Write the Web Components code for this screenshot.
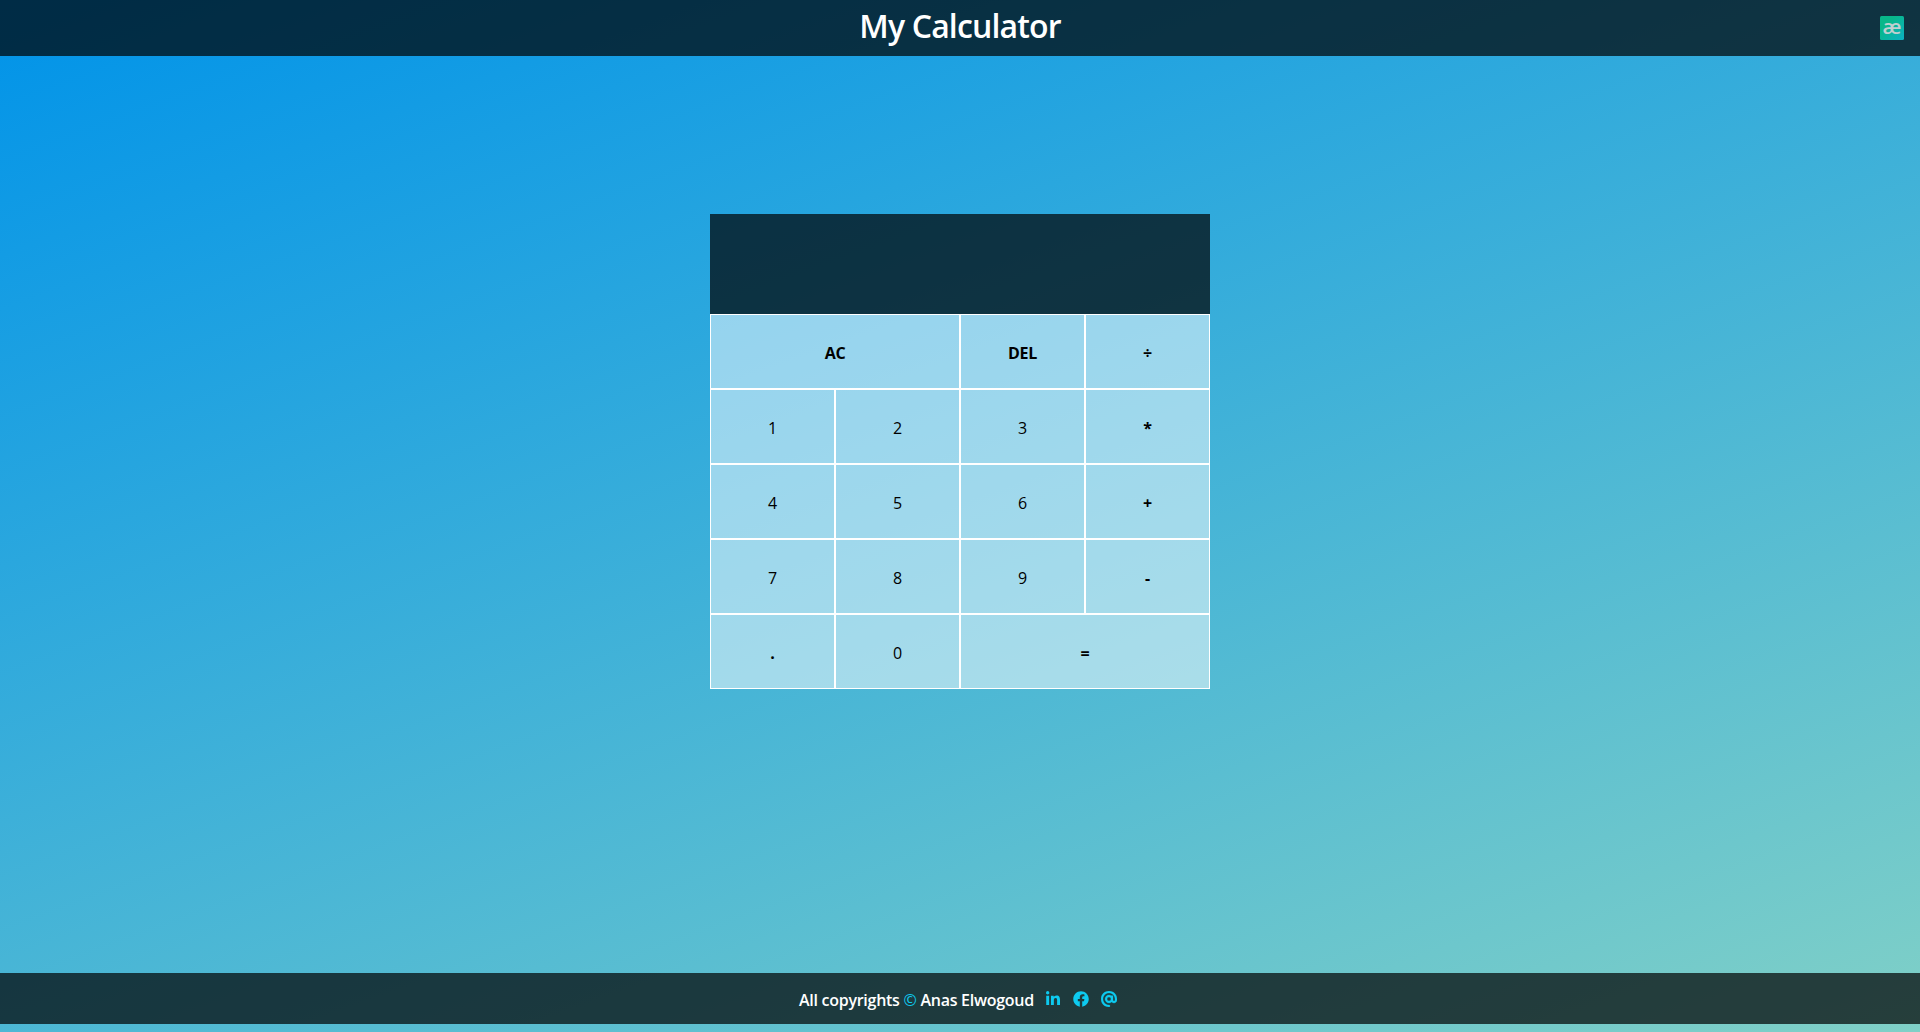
<!DOCTYPE html>
<html lang="en">
<head>
<meta charset="utf-8">
<title>My Calculator</title>
<style>
html{height:100%}
body{margin:0;height:100%;overflow:hidden;font-family:"Open Sans","Noto Sans",sans-serif;font-size:16px;line-height:24px;background:linear-gradient(160deg,#0093E9 0%,#80D0C7 100%)}
</style>
</head>
<body>
<calc-app></calc-app>
<script>
const define = (name, html) => customElements.define(name, class extends HTMLElement {
  constructor() {
    super();
    this.attachShadow({mode: 'open'}).innerHTML = html;
  }
});

define('brand-logo', `
<style>:host{display:block;width:24px;height:24px}svg{display:block;overflow:visible}text{font:600 20px "Open Sans",sans-serif;fill:#c0cfd0}</style>
<svg width="24" height="24" viewBox="0 0 24 24">
<defs><linearGradient id="g" x1="0" y1="0" x2="1" y2="1"><stop offset=".3" stop-color="#08b789"/><stop offset="1" stop-color="#0cb0c4"/></linearGradient></defs>
<rect width="24" height="24" rx="1.5" fill="url(#g)"/>
<text x="2.5" y="17.5" textLength="19" lengthAdjust="spacingAndGlyphs">æ</text>
</svg>`);

define('page-header', `
<style>
:host{display:grid;grid-template-columns:1fr auto 1fr;height:56px;flex:none;background:rgba(0,0,0,.7);color:#fff;padding:0 16px;box-sizing:border-box}
h1{grid-column:2;margin:7px 0 0;font-size:32px;line-height:38px;font-weight:600;letter-spacing:-.85px;white-space:nowrap}
brand-logo{justify-self:end;margin-top:16px}
</style><h1><slot></slot></h1><brand-logo></brand-logo>`);

customElements.define('calc-key', class extends HTMLElement {
  constructor() {
    super();
    this.attachShadow({mode: 'open'}).innerHTML = `
<style>
:host{display:flex;align-items:center;justify-content:center;box-sizing:border-box;border:1px solid #fff;background:rgba(255,255,255,.5);color:#000;font-weight:700;padding-top:2px}
:host([digit]){font-weight:400}
:host([wide]){grid-column:span 2}
</style><slot></slot>`;
  }
});

define('calc-pad', `
<style>
:host{display:grid;grid-template-columns:repeat(4,125px);grid-template-rows:100px repeat(5,75px);width:500px}
.display{grid-column:1/-1;background:rgba(0,0,0,.7)}
.word{letter-spacing:-.3px}
</style>
<div class="display"></div>
<calc-key wide class="word">AC</calc-key><calc-key class="word">DEL</calc-key><calc-key>÷</calc-key>
<calc-key digit>1</calc-key><calc-key digit>2</calc-key><calc-key digit>3</calc-key><calc-key>*</calc-key>
<calc-key digit>4</calc-key><calc-key digit>5</calc-key><calc-key digit>6</calc-key><calc-key>+</calc-key>
<calc-key digit>7</calc-key><calc-key digit>8</calc-key><calc-key digit>9</calc-key><calc-key>-</calc-key>
<calc-key>.</calc-key><calc-key digit>0</calc-key><calc-key wide>=</calc-key>`);

define('page-footer', `
<style>
:host{display:flex;justify-content:center;height:51px;flex:none;margin-bottom:8px;background:rgba(0,0,0,.7);color:#fff;font-weight:600}
.row{display:flex;width:322px;padding-top:14px}
.text{width:247px;margin-top:1px;white-space:nowrap;letter-spacing:-.27px}
.text span{color:#0dcaf0;font-weight:500}
svg{fill:#0dcaf0;height:16px;margin-top:4px;flex:none}
.in{width:14px;margin-right:13px}.fb{width:16px;margin-right:12px}.at{width:16px;stroke:#0dcaf0;stroke-width:10}
</style>
<div class="row">
<div class="text">All copyrights <span>©</span> Anas Elwogoud</div>
<svg class="in" viewBox="0 0 448 512"><path d="M100.28 448H7.4V148.9h92.88zM53.79 108.1C24.09 108.1 0 83.5 0 53.8a53.79 53.79 0 0 1 107.58 0c0 29.7-24.1 54.3-53.79 54.3zM447.9 448h-92.68V302.4c0-34.7-.7-79.2-48.29-79.2-48.29 0-55.69 37.7-55.69 76.7V448h-92.78V148.9h89.08v40.8h1.3c12.4-23.5 42.69-48.3 87.88-48.3 94 0 111.28 61.9 111.28 142.3V448z"/></svg>
<svg class="fb" viewBox="0 0 512 512"><path d="M504 256C504 119 393 8 256 8S8 119 8 256c0 123.78 90.69 226.38 209.25 245V327.69h-63V256h63v-54.64c0-62.15 37-96.48 93.67-96.48 27.14 0 55.52 4.84 55.52 4.84v61h-31.28c-30.8 0-40.41 19.12-40.41 38.73V256h68.78l-11 71.69h-57.78V501C413.31 482.38 504 379.78 504 256z"/></svg>
<svg class="at" viewBox="0 0 512 512"><path d="M256 64C150 64 64 150 64 256s86 192 192 192c17.7 0 32 14.3 32 32s-14.3 32-32 32C114.6 512 0 397.4 0 256S114.6 0 256 0S512 114.6 512 256v32c0 53-43 96-96 96c-29.3 0-55.6-13.2-73.2-33.9C320 371.1 289.5 384 256 384c-70.7 0-128-57.3-128-128s57.3-128 128-128c27.9 0 53.7 8.9 74.7 24.1c5.7-5 13.1-8.1 21.3-8.1c17.7 0 32 14.3 32 32v112c0 17.7 14.3 32 32 32s32-14.3 32-32V256c0-106-86-192-192-192zm64 192a64 64 0 1 0-128 0 64 64 0 1 0 128 0z"/></svg>
</div>`);

define('calc-app', `
<style>
:host{display:flex;flex-direction:column;height:100vh}
main{flex:1;display:flex;justify-content:center;align-items:flex-start;padding-top:158px}
</style>
<page-header>My Calculator</page-header>
<main><calc-pad></calc-pad></main>
<page-footer></page-footer>`);
</script>
</body>
</html>
